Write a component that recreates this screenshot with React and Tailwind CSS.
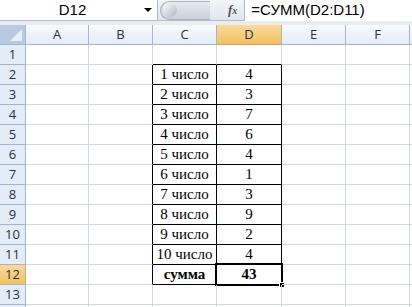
import React from "react"

const cols = [
  { name: "A", w: "w-[63px]" },
  { name: "B", w: "w-[64px]" },
  { name: "C", w: "w-[64px]" },
  { name: "D", w: "w-[65px]" },
  { name: "E", w: "w-[64px]" },
  { name: "F", w: "w-[64px]" },
  { name: "", w: "w-[64px]" },
]

const data = {
  2: ["1 число", "4"],
  3: ["2 число", "3"],
  4: ["3 число", "7"],
  5: ["4 число", "6"],
  6: ["5 число", "4"],
  7: ["6 число", "1"],
  8: ["7 число", "3"],
  9: ["8 число", "9"],
  10: ["9 число", "2"],
  11: ["10 число", "4"],
  12: ["сумма", "43"],
}

const rows = [1, 2, 3, 4, 5, 6, 7, 8, 9, 10, 11, 12, 13, 14]

function FormulaBar() {
  return (
    <div className="h-[25px] bg-[#e9edf2] flex items-start">
      <div className="w-[158px] h-[21px] bg-white border-b border-r border-[#b4bcc6] flex items-center relative">
        <span className="w-full text-center text-[15px] text-black pr-[12px]" style={{ fontFamily: "'Liberation Sans', Arial, sans-serif" }}>D12</span>
        <span className="absolute right-[5px] top-[8px] w-0 h-0 border-l-[4px] border-r-[4px] border-t-[4px] border-l-transparent border-r-transparent border-t-black" />
      </div>
      <div className="h-[21px] flex-1 flex items-center bg-gradient-to-b from-[#f2f5f9] to-[#dfe6ef] border-b border-[#b4bcc6]">
        <div className="ml-[2px] h-[19px] w-[50px] rounded-l-full bg-gradient-to-b from-[#e6eaef] to-[#c9d1db] border border-[#a9b2be] border-r-0 flex items-center">
          <div className="ml-[2px] w-[14px] h-[14px] rounded-full bg-gradient-to-br from-[#ffffff] to-[#aeb6c1]" />
        </div>
        <div className="w-[18px]" />
        <span className="text-[#555] italic text-[13px] font-semibold" style={{ fontFamily: "'Liberation Serif', serif" }}>f<span className="text-[10px]">x</span></span>
        <div className="ml-[7px] flex-1 h-[21px] bg-white border-l border-[#b4bcc6] flex items-center pl-[6px]">
          <span className="text-[15px] text-black" style={{ fontFamily: "'Liberation Sans', Arial, sans-serif" }}>=СУММ(D2:D11)</span>
        </div>
      </div>
    </div>
  )
}

function HeaderRow() {
  return (
    <div className="flex h-[20px]">
      <div className="w-[26px] shrink-0 border-r border-b border-[#9eb6ce] bg-[#b8c9e1] relative overflow-hidden">
        <div className="absolute right-[3px] bottom-[3px] w-0 h-0 border-l-[12px] border-b-[12px] border-l-transparent border-b-[#e9eef6]" />
      </div>
      {cols.map((c, i) => (
        <div
          key={i}
          className={`${c.w} shrink-0 border-r border-b flex items-center justify-center text-[13px] ${
            c.name === "D"
              ? "bg-gradient-to-b from-[#f9d99f] to-[#f1c15f] border-[#f29536] border-r-[#c9b08a]"
              : "bg-gradient-to-b from-[#f8fafd] to-[#e4ecf7] border-[#9eb6ce]"
          } text-[#27313f]`}
          style={{ fontFamily: "'Open Sans', 'Liberation Sans', sans-serif" }}
        >
          {c.name}
        </div>
      ))}
    </div>
  )
}

function Row({ r }) {
  const inTable = r >= 2 && r <= 12
  const sel = r === 12
  return (
    <div className="flex h-[20px]">
      <div
        className={`w-[26px] shrink-0 border-r border-b flex items-center justify-center text-[13px] text-[#27313f] ${
          sel ? "bg-gradient-to-b from-[#f9d99f] to-[#f1c15f] border-[#c9b08a]" : "bg-[#e4ecf7] border-[#9eb6ce]"
        }`}
        style={{ fontFamily: "'Open Sans', 'Liberation Sans', sans-serif" }}
      >
        {r < 14 ? r : null}
      </div>
      {cols.map((c, i) => {
        const rightBlack = inTable && (c.name === "B" || c.name === "C" || c.name === "D")
        const bottomBlack = r >= 1 && r <= 12 && (c.name === "C" || c.name === "D")
        let text = null
        if (inTable && c.name === "C") text = data[r][0]
        if (inTable && c.name === "D") text = data[r][1]
        return (
          <div
            key={i}
            className={`${c.w} shrink-0 border-r border-b relative flex items-center justify-center text-[15px] text-black ${
              rightBlack ? "border-r-black" : "border-r-[#d0d7e5]"
            } ${bottomBlack ? "border-b-black" : "border-b-[#d0d7e5]"} ${sel ? "font-bold" : ""}`}
            style={{ fontFamily: "'Liberation Serif', 'Times New Roman', serif" }}
          >
            {text}
            {sel && c.name === "D" && (
              <div className="absolute left-[-2px] top-[-2px] right-[-2px] bottom-[-2px] border-2 border-black">
                <div className="absolute right-[-4px] bottom-[-4px] w-[6px] h-[6px] bg-black border border-white" />
              </div>
            )}
          </div>
        )
      })}
    </div>
  )
}

export default function App() {
  return (
    <div className="w-[412px] h-[307px] overflow-hidden bg-white">
      <FormulaBar />
      <HeaderRow />
      {rows.map((r) => (
        <Row key={r} r={r} />
      ))}
    </div>
  )
}
